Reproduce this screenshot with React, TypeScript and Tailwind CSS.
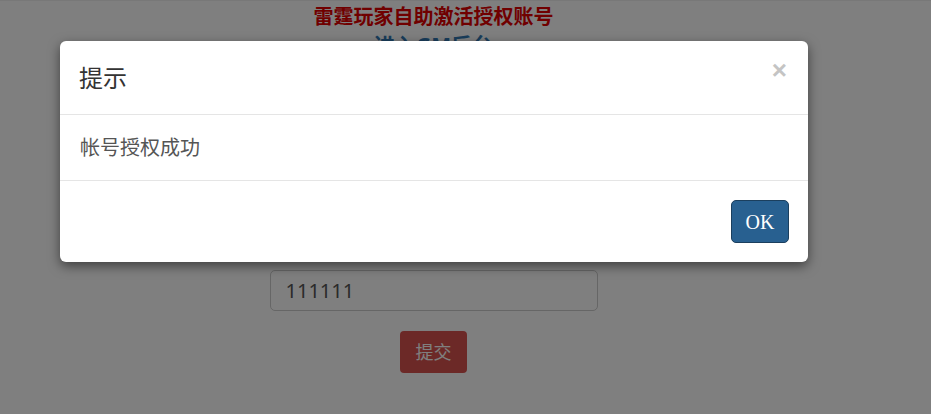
import React from "react";

export default function App() {
  const font = { fontFamily: '"Noto Sans", "Noto Sans CJK SC", sans-serif' };
  return (
    <div className="relative w-[931px] h-[414px] overflow-hidden bg-white" style={font}>
      <div className="h-[1px] bg-[#f0f0f0]" />
      <div className="w-[867px] flex flex-col items-center">
        <div className="mt-[2px] text-[20px] leading-[28px] font-bold text-[#e00000]">雷霆玩家自助激活授权账号</div>
        <div className="text-[21px] leading-[28px] font-bold text-[#337ab7]">进入GM后台</div>
        <div className="h-[211px]" />
        <div className="w-[328px] h-[41px] rounded-[5px] border border-[#ccc] flex items-center px-[15px] text-[20px] text-[#555]">111111</div>
        <div className="mt-[20px] w-[67px] h-[42px] rounded-[4px] bg-[#d9534f] flex items-center justify-center text-[18px] text-white">提交</div>
      </div>
      <div className="absolute inset-0 bg-black/50" />
      <div className="absolute left-[60px] top-[41px] w-[748px] rounded-[6px] bg-white shadow-[0_4px_12px_rgba(0,0,0,0.5)]">
        <div className="relative h-[74px] border-b border-[#e5e5e5] flex items-center px-[19px]">
          <div className="text-[24px] text-[#333]">提示</div>
          <div className="absolute right-[21px] top-[14px] text-[26px] leading-[30px] text-[#c4c4c4] font-bold" style={{ fontFamily: '"Liberation Sans", sans-serif' }}>×</div>
        </div>
        <div className="h-[66px] border-b border-[#e5e5e5] flex items-center px-[20px] text-[20px] text-[#555]">帐号授权成功</div>
        <div className="h-[81px] flex items-center justify-end pr-[19px]">
          <div className="w-[58px] h-[43px] rounded-[5px] bg-[#286090] border border-[#1b3f5e] flex items-center justify-center text-[20px] text-white" style={{ fontFamily: '"Liberation Serif", serif' }}>OK</div>
        </div>
      </div>
    </div>
  );
}
